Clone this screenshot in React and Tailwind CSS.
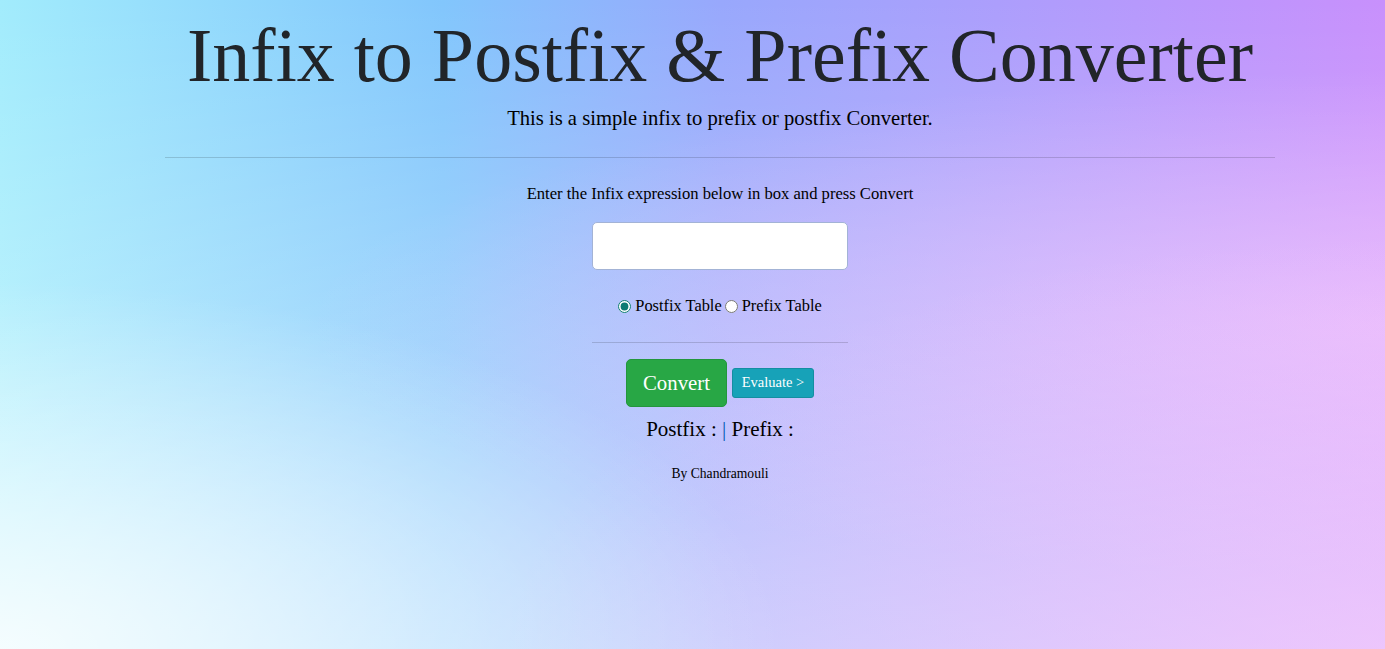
import React, { useState } from 'react';

function App() {
  const [mode, setMode] = useState('postfix');
  const [expr, setExpr] = useState('');

  return (
    <div className="min-h-screen w-full font-['Liberation_Serif','Times_New_Roman',serif] text-[#212529] bg-[radial-gradient(ellipse_at_bottom_left,rgba(255,255,255,0.8)_0%,rgba(255,255,255,0)_40%),radial-gradient(ellipse_at_bottom_right,rgba(244,200,252,0.6)_0%,rgba(244,200,252,0)_45%),radial-gradient(ellipse_at_right,rgba(250,205,252,0.55)_0%,rgba(250,205,252,0)_55%),linear-gradient(to_bottom,rgba(255,255,255,0)_0%,rgba(255,255,255,0.45)_100%),linear-gradient(to_right,#a2ecfc_0%,#82c6fc_32%,#98a8fc_52%,#c890fc_100%)]">
      <div className="flex justify-center pl-[55px]">
        <div className="w-[1110px] flex flex-col items-center">
          {/* header */}
          <h1 className="mt-[10px] text-[76px] leading-[90px] font-normal text-[#212529] whitespace-nowrap">
            Infix to Postfix &amp; Prefix Converter
          </h1>
          <p className="mt-[3px] text-[20.6px] leading-[30px] text-black">
            This is a simple infix to prefix or postfix Converter.
          </p>
          <hr className="mt-[24px] w-full border-0 border-t border-black/15" />

          {/* form */}
          <p className="mt-[24px] text-[16.6px] leading-[24px] text-black">
            Enter the Infix expression below in box and press Convert
          </p>
          <input
            type="text"
            value={expr}
            onChange={(e) => setExpr(e.target.value)}
            className="mt-[16px] w-[256px] h-[48px] bg-white border border-[#a3b3d6] rounded-[5px] px-4 text-[20px] outline-none"
          />
          <div className="mt-[24px] flex items-center text-[16.4px] leading-[24px] text-black">
            <input
              type="radio"
              name="table"
              checked={mode === 'postfix'}
              onChange={() => setMode('postfix')}
              className="m-0 w-[13px] h-[13px] accent-[#0b7a72]"
            />
            <span className="ml-[4px]">Postfix Table</span>
            <input
              type="radio"
              name="table"
              checked={mode === 'prefix'}
              onChange={() => setMode('prefix')}
              className="m-0 ml-[3px] w-[13px] h-[13px] accent-[#0b7a72]"
            />
            <span className="ml-[4px]">Prefix Table</span>
          </div>
          <hr className="mt-[24px] w-[256px] border-0 border-t border-black/15" />

          <div className="mt-[16px] flex items-center gap-[5px]">
            <button className="w-[101px] h-[48px] bg-[#28a745] border border-[#23963d] rounded-[5px] text-white text-[20.8px]">
              Convert
            </button>
            <button className="w-[82px] h-[30px] bg-[#17a2b8] border border-[#148ea1] rounded-[3px] text-white text-[14.5px]">
              Evaluate &gt;
            </button>
          </div>

          <p className="mt-[7px] text-[21px] leading-[31.5px] text-black whitespace-pre">
            Postfix : <span className="text-[#0056b3]">|</span> Prefix :
          </p>
          <p className="mt-[18px] text-[13.6px] leading-[20px] text-black">By Chandramouli</p>
        </div>
      </div>
    </div>
  );
}

export default App;
